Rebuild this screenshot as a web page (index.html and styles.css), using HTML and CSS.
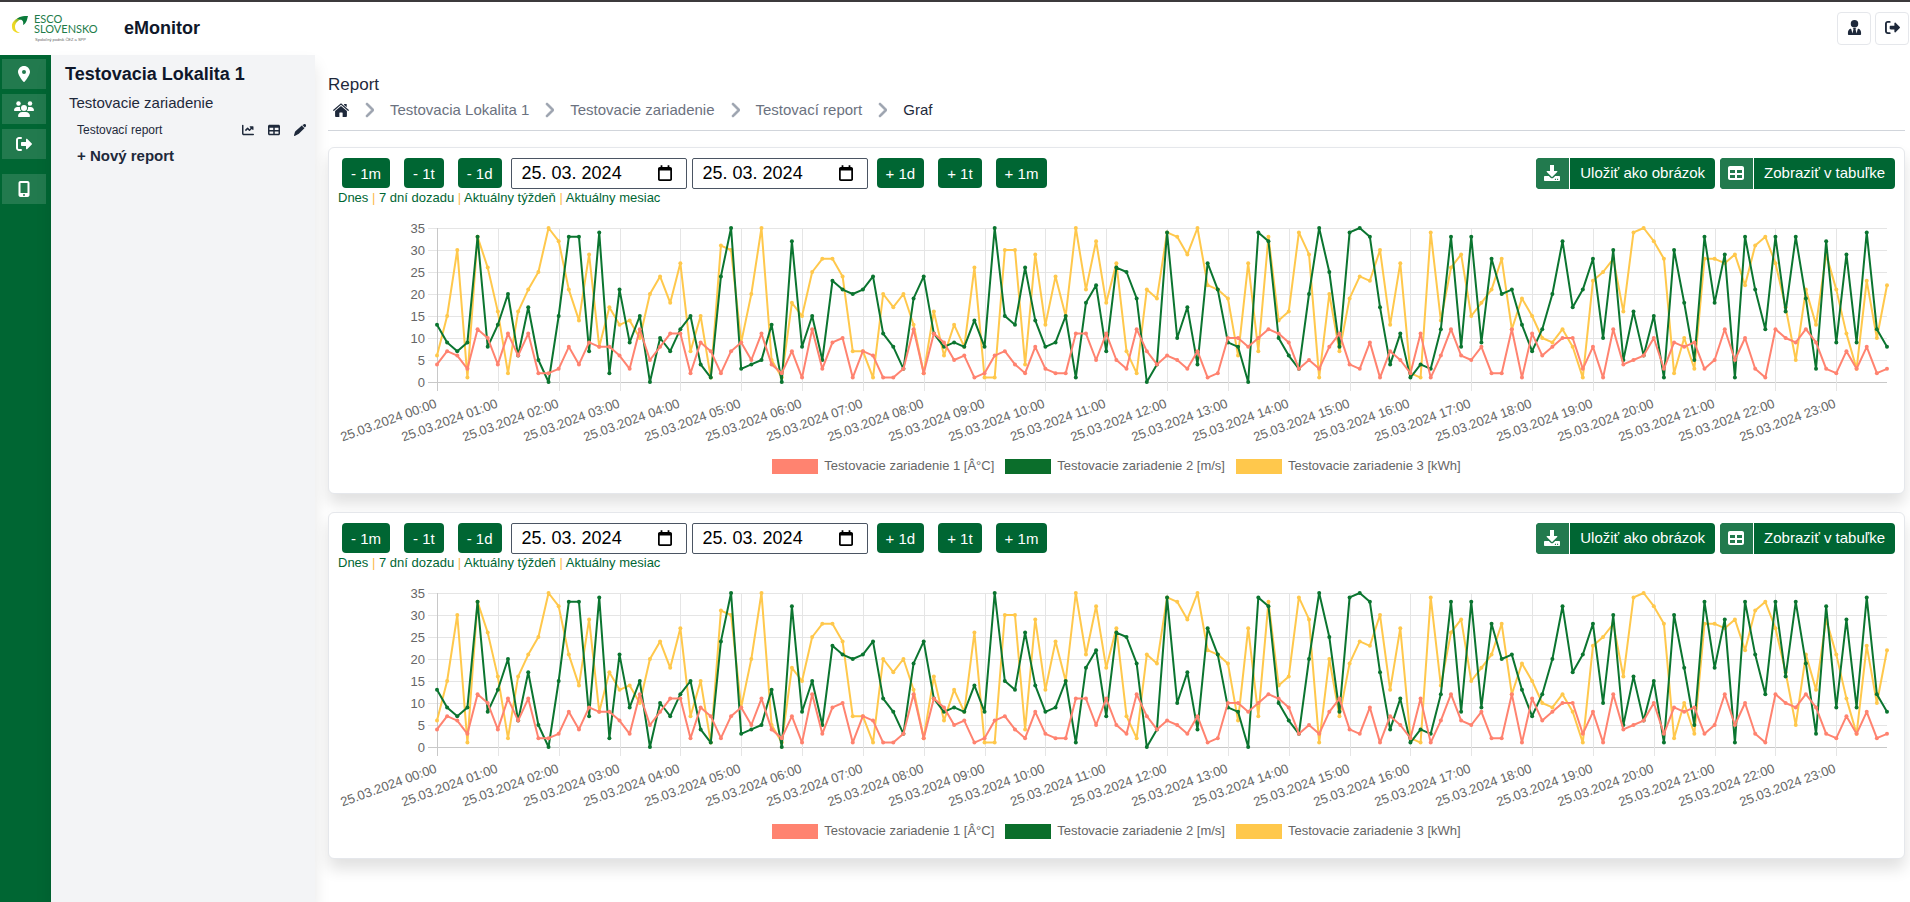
FILE: index.html
```
<!DOCTYPE html>
<html lang="sk">
<head>
    <meta charset="UTF-8">
    <meta name="viewport" content="width=device-width, initial-scale=1.0">
    <title>eMonitor - Report</title>
    <link rel="stylesheet" href="styles.css">
</head>
<body>
    <svg class="sprite" aria-hidden="true">
        <symbol id="i-pin" viewBox="0 0 384 512"><path d="M215.700 499.200C267 435 384 279.400 384 192 384 86 298 0 192 0S0 86 0 192c0 87.400 117 243 168.300 307.200a30 30 0 0 0 47.400 0zM192 128a64 64 0 1 1 0 128 64 64 0 1 1 0-128z"/></symbol>
        <symbol id="i-users" viewBox="0 0 640 512"><circle cx="144" cy="80" r="72"/><circle cx="512" cy="80" r="72"/><path d="M0 298c0-58 48-106 106-106h43c16 0 31 4 45 10-8 52 8 94 42 118H22c-12 0-22-10-22-22zM405 320c34-26 50-70 42-118 14-7 29-10 45-10h42c58 0 106 48 106 106 0 12-10 22-22 22H405z"/><circle cx="320" cy="224" r="96"/><path d="M128 485c0-74 60-133 133-133h118c73 0 133 59 133 133 0 15-12 27-27 27H155c-15 0-27-12-27-27z"/></symbol>
        <symbol id="i-exit" viewBox="0 0 512 512"><path d="M160 96a32 32 0 1 0 0-64H96C43 32 0 75 0 128v256c0 53 43 96 96 96h64a32 32 0 1 0 0-64H96c-18 0-32-14-32-32V128c0-18 14-32 32-32h64zm345 177c9-10 9-25 0-34L361 95c-7-7-17-9-26-5s-15 12-15 22v80H192c-18 0-32 14-32 32v64c0 18 14 32 32 32h128v80c0 10 6 18 15 22s19 2 26-5l144-144z"/></symbol>
        <symbol id="i-phone" viewBox="0 0 384 512"><path fill-rule="evenodd" d="M16 64C16 29 45 0 80 0h224c35 0 64 29 64 64v384c0 35-29 64-64 64H80c-35 0-64-29-64-64V64zm64 0v320h224V64H80zm112 352a32 32 0 1 0 0 64 32 32 0 1 0 0-64z"/></symbol>
        <symbol id="i-chart" viewBox="0 0 512 512"><path d="M64 64a32 32 0 1 0-64 0v336c0 44 36 80 80 80h400a32 32 0 1 0 0-64H80c-9 0-16-7-16-16V64zm288 32c-10 0-18 6-22 15s-2 19 5 26l35 35-50 50-57-58a32 32 0 0 0-46 0l-96 96 46 46 73-74 57 58a32 32 0 0 0 46 0l73-73 33 33c7 7 17 9 26 5s15-12 15-22V120c0-13-11-24-24-24H352z"/></symbol>
        <symbol id="i-table" viewBox="0 0 512 512"><path fill-rule="evenodd" d="M64 32h384c35 0 64 29 64 64v320c0 35-29 64-64 64H64c-35 0-64-29-64-64V96c0-35 29-64 64-64zm0 128v96h160v-96H64zm224 0v96h160v-96H288zM64 320v96h160v-96H64zm224 0v96h160v-96H288z"/></symbol>
        <symbol id="i-pencil" viewBox="0 0 512 512"><path d="M410 18c25-25 65-25 90 0a64 64 0 0 1 0 91l-40 40-104-104 54-27zM333 68l112 112-240 240c-11 11-24 18-38 22L30 511c-9 3-17 1-24-5s-9-16-6-24L37 347c4-15 12-28 23-39L333 68z"/></symbol>
        <symbol id="i-user" viewBox="0 0 448 512"><path d="M96 128a128 128 0 1 1 256 0 128 128 0 1 1-256 0zm94 170-30-26h128l-30 26 8 40 30 120 34-138c4-16 20-27 36-20 48 19 82 70 82 126v60c0 15-11 26-26 26H26c-15 0-26-11-26-26v-60c0-56 34-107 82-126 16-7 32 4 36 20l34 138 30-120 8-40z"/></symbol>
        <symbol id="i-home" viewBox="0 0 576 512"><path d="M298 16 568 250c12 10 8 26 2 33s-22 11-32 2L288 68 38 285c-12 10-26 5-32-2s-10-23 2-33L278 16c6-5 14-5 20 0z"/><path d="M288 106 504 294v178c0 22-18 40-40 40H348V364c0-12-8-20-20-20h-80c-12 0-20 8-20 20v148H112c-22 0-40-18-40-40V294zM416 32h64c10 0 16 6 16 16v110l-96-84V48c0-10 6-16 16-16z"/></symbol>
        <symbol id="i-next" viewBox="0 0 320 512"><path stroke="currentColor" stroke-width="24" d="M310 233c13 13 13 33 0 46L118 471c-13 12-33 12-46 0s-12-33 0-46l170-169L73 87c-12-13-12-33 0-46s33-12 46 0l191 192z"/></symbol>
        <symbol id="i-save" viewBox="0 0 512 512"><path d="M192 0h128v192h88c18 0 26 20 13 33L270 376c-8 8-20 8-28 0L91 225c-13-13-5-33 13-33h88V0z"/><path fill-rule="evenodd" d="M24 352h128l68 60c22 20 50 20 72 0l68-60h128c14 0 24 10 24 24v112c0 14-10 24-24 24H24c-14 0-24-10-24-24V376c0-14 10-24 24-24zm324 90v36h34v-36h-34zm70 0v36h34v-36h-34z"/></symbol>
        <symbol id="i-calendar" viewBox="0 0 16 18"><path fill-rule="evenodd" d="M3 0h2v2h6V0h2v2h1c1 0 2 1 2 2v12c0 1-1 2-2 2H2c-1 0-2-1-2-2V4c0-1 1-2 2-2h1V0zM2 6v10h12V6H2z"/></symbol>
    </svg>

    <header class="topbar">
        <svg class="logo" viewBox="0 0 90 32" role="img" aria-label="ESCO Slovensko">
            <defs>
                <linearGradient id="leaf" x1="1" y1="0" x2="0" y2="1">
                    <stop offset="0" stop-color="#0a7a3b"/>
                    <stop offset="0.35" stop-color="#5fa838"/>
                    <stop offset="0.6" stop-color="#e6d422"/>
                    <stop offset="1" stop-color="#f8e02a"/>
                </linearGradient>
            </defs>
            <path d="M18 3C8 3 1 8 2 14c0 4 4 6 8 6-3-1-5-3-5-6 0-4 3-7 7-8z" fill="url(#leaf)"/>
            <path d="M7 6c3-3 7-3 11-3-1 3-1 7-5 9 1-4-1-6-6-6z" fill="#0a7a3b"/>
            <text class="logo-name" x="24" y="10">ESCO</text>
            <text class="logo-name" x="24" y="20">SLOVENSKO</text>
            <text class="logo-sub" x="25" y="28">Spoločný podnik ČEZ a SPP</text>
        </svg>
        <h1>eMonitor</h1>
        <div class="topbar-actions">
            <button type="button" aria-label="Profil"><svg><use href="#i-user"/></svg></button>
            <button type="button" aria-label="Odhlásiť"><svg><use href="#i-exit"/></svg></button>
        </div>
    </header>

    <div class="layout">
        <nav class="rail">
            <a href="#" aria-label="Lokality"><svg><use href="#i-pin"/></svg></a>
            <a href="#" aria-label="Používatelia"><svg><use href="#i-users"/></svg></a>
            <a href="#" aria-label="Odhlásiť"><svg><use href="#i-exit"/></svg></a>
            <a href="#" class="rail-device" aria-label="Zariadenia"><svg><use href="#i-phone"/></svg></a>
        </nav>

        <aside class="panel">
            <h2>Testovacia Lokalita 1</h2>
            <a href="#" class="panel-device">Testovacie zariadenie</a>
            <div class="panel-report">
                <a href="#">Testovací report</a>
                <a href="#" class="panel-icon" aria-label="Graf"><svg><use href="#i-chart"/></svg></a>
                <a href="#" class="panel-icon" aria-label="Tabuľka"><svg><use href="#i-table"/></svg></a>
                <a href="#" class="panel-icon" aria-label="Upraviť"><svg><use href="#i-pencil"/></svg></a>
            </div>
            <a href="#" class="panel-new">+ Nový report</a>
        </aside>

        <main class="content">
            <div class="page-title">Report</div>
            <nav class="breadcrumb">
                <a href="#" class="home" aria-label="Domov"><svg><use href="#i-home"/></svg></a>
                <svg class="next"><use href="#i-next"/></svg>
                <a href="#">Testovacia Lokalita 1</a>
                <svg class="next"><use href="#i-next"/></svg>
                <a href="#">Testovacie zariadenie</a>
                <svg class="next"><use href="#i-next"/></svg>
                <a href="#">Testovací report</a>
                <svg class="next"><use href="#i-next"/></svg>
                <span>Graf</span>
            </nav>

            <section class="card">
                <div class="toolbar">
                    <div class="steps">
                        <button type="button" class="btn">- 1m</button>
                        <button type="button" class="btn">- 1t</button>
                        <button type="button" class="btn">- 1d</button>
                    </div>
                    <div class="dates">
                        <label class="date"><input type="text" value="25. 03. 2024" aria-label="Od"><svg><use href="#i-calendar"/></svg></label>
                        <label class="date"><input type="text" value="25. 03. 2024" aria-label="Do"><svg><use href="#i-calendar"/></svg></label>
                    </div>
                    <div class="steps">
                        <button type="button" class="btn">+ 1d</button>
                        <button type="button" class="btn">+ 1t</button>
                        <button type="button" class="btn">+ 1m</button>
                    </div>
                    <div class="exports">
                        <button type="button" class="export"><span class="export-icon"><svg><use href="#i-save"/></svg></span><span class="export-text">Uložiť ako obrázok</span></button>
                        <button type="button" class="export"><span class="export-icon"><svg><use href="#i-table"/></svg></span><span class="export-text">Zobraziť v tabuľke</span></button>
                    </div>
                </div>
                <div class="ranges">
                    <a href="#">Dnes</a> | <a href="#">7 dní dozadu</a> | <a href="#">Aktuálny týždeň</a> | <a href="#">Aktuálny mesiac</a>
                </div>
                <div class="chart"></div>
                <ul class="legend">
                    <li><span class="swatch swatch-temp"></span>Testovacie zariadenie 1 [Â°C]</li>
                    <li><span class="swatch swatch-wind"></span>Testovacie zariadenie 2 [m/s]</li>
                    <li><span class="swatch swatch-power"></span>Testovacie zariadenie 3 [kWh]</li>
                </ul>
            </section>

            <section class="card">
                <div class="toolbar">
                    <div class="steps">
                        <button type="button" class="btn">- 1m</button>
                        <button type="button" class="btn">- 1t</button>
                        <button type="button" class="btn">- 1d</button>
                    </div>
                    <div class="dates">
                        <label class="date"><input type="text" value="25. 03. 2024" aria-label="Od"><svg><use href="#i-calendar"/></svg></label>
                        <label class="date"><input type="text" value="25. 03. 2024" aria-label="Do"><svg><use href="#i-calendar"/></svg></label>
                    </div>
                    <div class="steps">
                        <button type="button" class="btn">+ 1d</button>
                        <button type="button" class="btn">+ 1t</button>
                        <button type="button" class="btn">+ 1m</button>
                    </div>
                    <div class="exports">
                        <button type="button" class="export"><span class="export-icon"><svg><use href="#i-save"/></svg></span><span class="export-text">Uložiť ako obrázok</span></button>
                        <button type="button" class="export"><span class="export-icon"><svg><use href="#i-table"/></svg></span><span class="export-text">Zobraziť v tabuľke</span></button>
                    </div>
                </div>
                <div class="ranges">
                    <a href="#">Dnes</a> | <a href="#">7 dní dozadu</a> | <a href="#">Aktuálny týždeň</a> | <a href="#">Aktuálny mesiac</a>
                </div>
                <div class="chart"></div>
                <ul class="legend">
                    <li><span class="swatch swatch-temp"></span>Testovacie zariadenie 1 [Â°C]</li>
                    <li><span class="swatch swatch-wind"></span>Testovacie zariadenie 2 [m/s]</li>
                    <li><span class="swatch swatch-power"></span>Testovacie zariadenie 3 [kWh]</li>
                </ul>
            </section>
        </main>
    </div>

    <script src="chart.js"></script>
</body>
</html>
```

FILE: styles.css
```
* {
    margin: 0;
    padding: 0;
    box-sizing: border-box;
}

body {
    display: flex;
    flex-direction: column;
    min-height: 100vh;
    background-color: white;
    color: #1e293b;
    font-family: 'Liberation Sans', Arial, sans-serif;
    font-size: 15px;
}

a {
    color: inherit;
    text-decoration: none;
}

button,
input {
    font-family: inherit;
    color: inherit;
}

button {
    cursor: pointer;
}

svg {
    fill: currentColor;
    display: block;
}

.sprite {
    position: absolute;
    width: 0;
    height: 0;
}

.topbar {
    display: flex;
    align-items: center;
    height: 55px;
    border-top: 2px solid #3c3a3c;
    padding-left: 10px;
}

.logo {
    width: 90px;
    height: 32px;
    margin-right: 24px;
    overflow: visible;
}

.logo-name {
    font-family: Lato, sans-serif;
    font-size: 11px;
    fill: #1d7c4a;
}

.logo-sub {
    font-size: 4px;
    fill: #666;
}

.topbar h1 {
    font-size: 18px;
    color: #0f172a;
}

.topbar-actions {
    display: flex;
    gap: 4px;
    margin-left: auto;
    padding-right: 1px;
}

.topbar-actions button {
    display: flex;
    align-items: center;
    justify-content: center;
    width: 34px;
    height: 33px;
    padding-bottom: 2px;
    background-color: white;
    border: 1px solid #e5e7eb;
    border-radius: 4px;
}

.topbar-actions svg {
    width: 15px;
    height: 15px;
}

.layout {
    display: flex;
    flex: 1;
}

.rail {
    display: flex;
    flex-direction: column;
    gap: 5px;
    width: 51px;
    padding: 4px 5px 4px 2px;
    background-color: #006633;
    color: white;
}

.rail a {
    display: flex;
    align-items: center;
    justify-content: center;
    height: 30px;
    background-color: #227a4e;
}

.rail svg {
    width: 20px;
    height: 16px;
}

.rail .rail-device {
    margin-top: 10px;
}

.panel {
    display: flex;
    flex-direction: column;
    width: 264px;
    padding: 8px 9px 8px 14px;
    background-color: #f3f4f6;
    box-shadow: 0 10px 15px rgba(0, 0, 0, 0.1);
}

.panel h2 {
    font-size: 18px;
    line-height: 22px;
    color: #0f172a;
}

.panel-device {
    padding: 8px 4px;
    line-height: 20px;
}

.panel-report {
    display: flex;
    align-items: center;
    gap: 14px;
    padding-left: 12px;
    font-size: 12px;
    line-height: 18px;
}

.panel-report a:first-child {
    margin-right: auto;
}

.panel-icon svg {
    width: 12px;
    height: 12px;
}

.panel-new {
    padding: 8px 12px;
    font-weight: bold;
    line-height: 18px;
}

.content {
    flex: 1;
    min-width: 0;
    padding: 20px 5px 0 13px;
}

.page-title {
    font-size: 17px;
    line-height: 20px;
}

.breadcrumb {
    display: flex;
    align-items: center;
    height: 36px;
    margin-bottom: 16px;
    padding: 0 5px 6px;
    border-bottom: 1px solid #d1d5db;
    color: #6b7280;
}

.breadcrumb .home,
.breadcrumb span {
    color: #1e293b;
}

.breadcrumb .home svg {
    width: 16px;
    height: 14px;
}

.breadcrumb .next {
    width: 10px;
    height: 16px;
    margin: 0 16px 0 15px;
    color: #9ca3af;
}

.card {
    margin-bottom: 18px;
    padding: 9px;
    border: 1px solid #e5e7eb;
    border-radius: 6px;
    background-color: white;
    box-shadow: 0 10px 15px rgba(0, 0, 0, 0.12);
}

.toolbar {
    display: flex;
    align-items: center;
    height: 32px;
}

.steps {
    display: flex;
    gap: 14px;
    margin-left: 4px;
}

.dates {
    display: flex;
    gap: 5px;
    margin: 0 5px 0 9px;
}

.btn {
    height: 30px;
    padding: 0 9px;
    border: none;
    border-radius: 4px;
    background-color: #006633;
    color: white;
    font-size: 15px;
}

.date {
    display: flex;
    align-items: center;
    width: 176px;
    height: 31px;
    padding: 0 14px 0 10px;
    border: 1px solid #4b5563;
    border-radius: 2px;
    color: black;
}

.date input {
    flex: 1;
    min-width: 0;
    border: none;
    outline: none;
    background: none;
    font-size: 18px;
}

.date svg {
    width: 14px;
    height: 16px;
}

.exports {
    display: flex;
    gap: 5px;
    margin-left: auto;
}

.export {
    display: flex;
    height: 31px;
    border: none;
    border-radius: 4px;
    overflow: hidden;
    background-color: #006633;
    color: white;
    font-size: 15px;
}

.export-icon {
    display: flex;
    align-items: center;
    height: 100%;
    padding: 0 9px 0 8px;
    border-right: 1px solid white;
    background-color: #227a4e;
}

.export-icon svg {
    width: 16px;
    height: 16px;
}

.export-text {
    padding: 0 10px;
    line-height: 30px;
}

.ranges {
    line-height: 18px;
    font-size: 13px;
    color: #fdba4d;
}

.ranges a {
    color: #006633;
}

.chart {
    height: 249px;
}

.chart svg {
    overflow: visible;
}

.chart text {
    fill: #666;
    font-size: 13px;
    text-anchor: end;
}

.chart .grid {
    stroke: #e5e5e5;
}

.chart .axis {
    stroke: #c8c8c8;
}

.chart .series {
    fill: none;
    stroke-width: 2;
    stroke-linejoin: round;
}

.legend {
    display: flex;
    justify-content: center;
    gap: 11px;
    padding-bottom: 8px;
    list-style: none;
    color: #666;
    font-size: 13px;
    line-height: 20px;
}

.legend li {
    display: flex;
    align-items: center;
    gap: 6px;
}

.swatch {
    width: 46px;
    height: 15px;
}

.swatch-temp {
    background-color: #ff8370;
}

.swatch-wind {
    background-color: #0b6e2b;
}

.swatch-power {
    background-color: #ffc84c;
}
```

FILE: chart.js
```
// one value every 10 minutes, 25.03.2024 00:00 - 23:50
const temp = [
    4, 7, 6, 3, 12, 10, 4, 11, 6, 11, 2, 2, 3, 8, 4, 9, 8, 8, 6, 3, 12, 5, 8, 11,
    11, 2, 9, 7, 2, 7, 9, 5, 11, 4, 2, 7, 1, 12, 3, 9, 10, 1, 7, 6, 1, 1, 3, 12,
    2, 11, 9, 5, 6, 1, 2, 6, 7, 4, 2, 8, 3, 2, 2, 11, 11, 5, 11, 5, 3, 12, 7, 4,
    6, 5, 3, 7, 1, 2, 10, 10, 8, 10, 12, 11, 9, 3, 5, 3, 8, 11, 4, 3, 9, 1, 7, 5,
    2, 11, 1, 6, 12, 6, 5, 8, 2, 2, 12, 1, 11, 6, 8, 10, 10, 3, 8, 1, 12, 4, 5, 6,
    10, 3, 9, 8, 9, 3, 5, 12, 5, 10, 3, 1, 12, 10, 9, 12, 9, 3, 2, 7, 3, 8, 2, 3
];
const wind = [
    13, 9, 7, 9, 33, 8, 13, 20, 6, 17, 5, 0, 15, 33, 33, 7, 34, 2, 21, 9, 15, 0, 10, 7,
    12, 15, 4, 1, 24, 35, 3, 4, 5, 13, 0, 32, 8, 15, 5, 23, 21, 20, 21, 24, 11, 8, 3, 19,
    24, 11, 8, 9, 8, 14, 8, 35, 15, 13, 26, 14, 8, 9, 15, 1, 18, 22, 7, 26, 25, 19, 0, 4,
    34, 10, 17, 4, 27, 21, 9, 8, 0, 34, 32, 10, 6, 3, 20, 35, 25, 8, 34, 35, 33, 17, 4, 11,
    1, 4, 3, 12, 33, 8, 33, 9, 28, 20, 21, 13, 7, 12, 20, 32, 17, 21, 28, 10, 30, 5, 16, 6,
    15, 1, 30, 18, 5, 33, 18, 29, 1, 33, 21, 12, 33, 16, 33, 19, 3, 32, 9, 29, 9, 34, 12, 8
];
const power = [
    6, 15, 30, 1, 33, 26, 16, 2, 16, 21, 25, 35, 32, 21, 14, 29, 8, 17, 13, 14, 10, 20, 24, 18,
    27, 7, 15, 1, 31, 30, 9, 20, 35, 5, 1, 18, 15, 25, 28, 28, 24, 7, 7, 1, 20, 17, 20, 13,
    2, 16, 6, 13, 8, 26, 1, 1, 30, 30, 4, 29, 13, 24, 15, 35, 21, 32, 18, 27, 7, 2, 21, 19,
    34, 33, 29, 35, 22, 21, 19, 6, 27, 7, 33, 14, 16, 34, 29, 1, 20, 7, 19, 24, 23, 30, 13, 27,
    2, 1, 34, 14, 26, 29, 15, 18, 21, 28, 12, 19, 15, 10, 9, 12, 8, 1, 23, 25, 28, 16, 34, 35,
    32, 28, 2, 10, 3, 28, 28, 27, 29, 22, 31, 33, 27, 17, 5, 21, 13, 29, 21, 11, 3, 23, 10, 22
];

// drawn back to front
const series = [
    { values: power, color: '#ffc84c' },
    { values: wind, color: '#0b7530' },
    { values: temp, color: '#ff8370' }
];

const MAX = 35;
const LEFT = 99;
const RIGHT = 8;
const TOP = 21;
const PLOT = 154;

function line(x1, y1, x2, y2, cls) {
    return `<line class="${cls}" x1="${x1}" y1="${y1}" x2="${x2}" y2="${y2}"/>`;
}

function drawChart(box) {
    const width = box.clientWidth;
    const right = width - RIGHT;
    const bottom = TOP + PLOT;
    const x = i => LEFT + (right - LEFT) * i / (temp.length - 1);
    const y = v => bottom - PLOT * v / MAX;
    let out = '';

    for (let v = 0; v <= MAX; v += 5) {
        const gy = Math.round(y(v)) + 0.5;
        out += line(LEFT - 9, gy, right, gy, v === 0 ? 'axis' : 'grid');
        out += `<text x="${LEFT - 12}" y="${gy + 4}">${v}</text>`;
    }

    for (let i = 0; i < temp.length; i += 6) {
        const gx = Math.round(x(i)) + 0.5;
        const hour = String(i / 6).padStart(2, '0');
        out += line(gx, TOP, gx, bottom + 9, i === 0 ? 'axis' : 'grid');
        out += `<text transform="translate(${gx} ${bottom + 25}) rotate(-20)">25.03.2024 ${hour}:00</text>`;
    }

    for (const s of series) {
        const points = s.values.map((v, i) => `${x(i)},${y(v)}`).join(' ');
        out += `<polyline class="series" stroke="${s.color}" points="${points}"/>`;
        out += s.values.map((v, i) => `<circle cx="${x(i)}" cy="${y(v)}" r="2" fill="${s.color}"/>`).join('');
    }

    box.innerHTML = `<svg width="${width}" height="${box.clientHeight}">${out}</svg>`;
}

function drawAll() {
    document.querySelectorAll('.chart').forEach(drawChart);
}

drawAll();
window.addEventListener('resize', drawAll);
```
